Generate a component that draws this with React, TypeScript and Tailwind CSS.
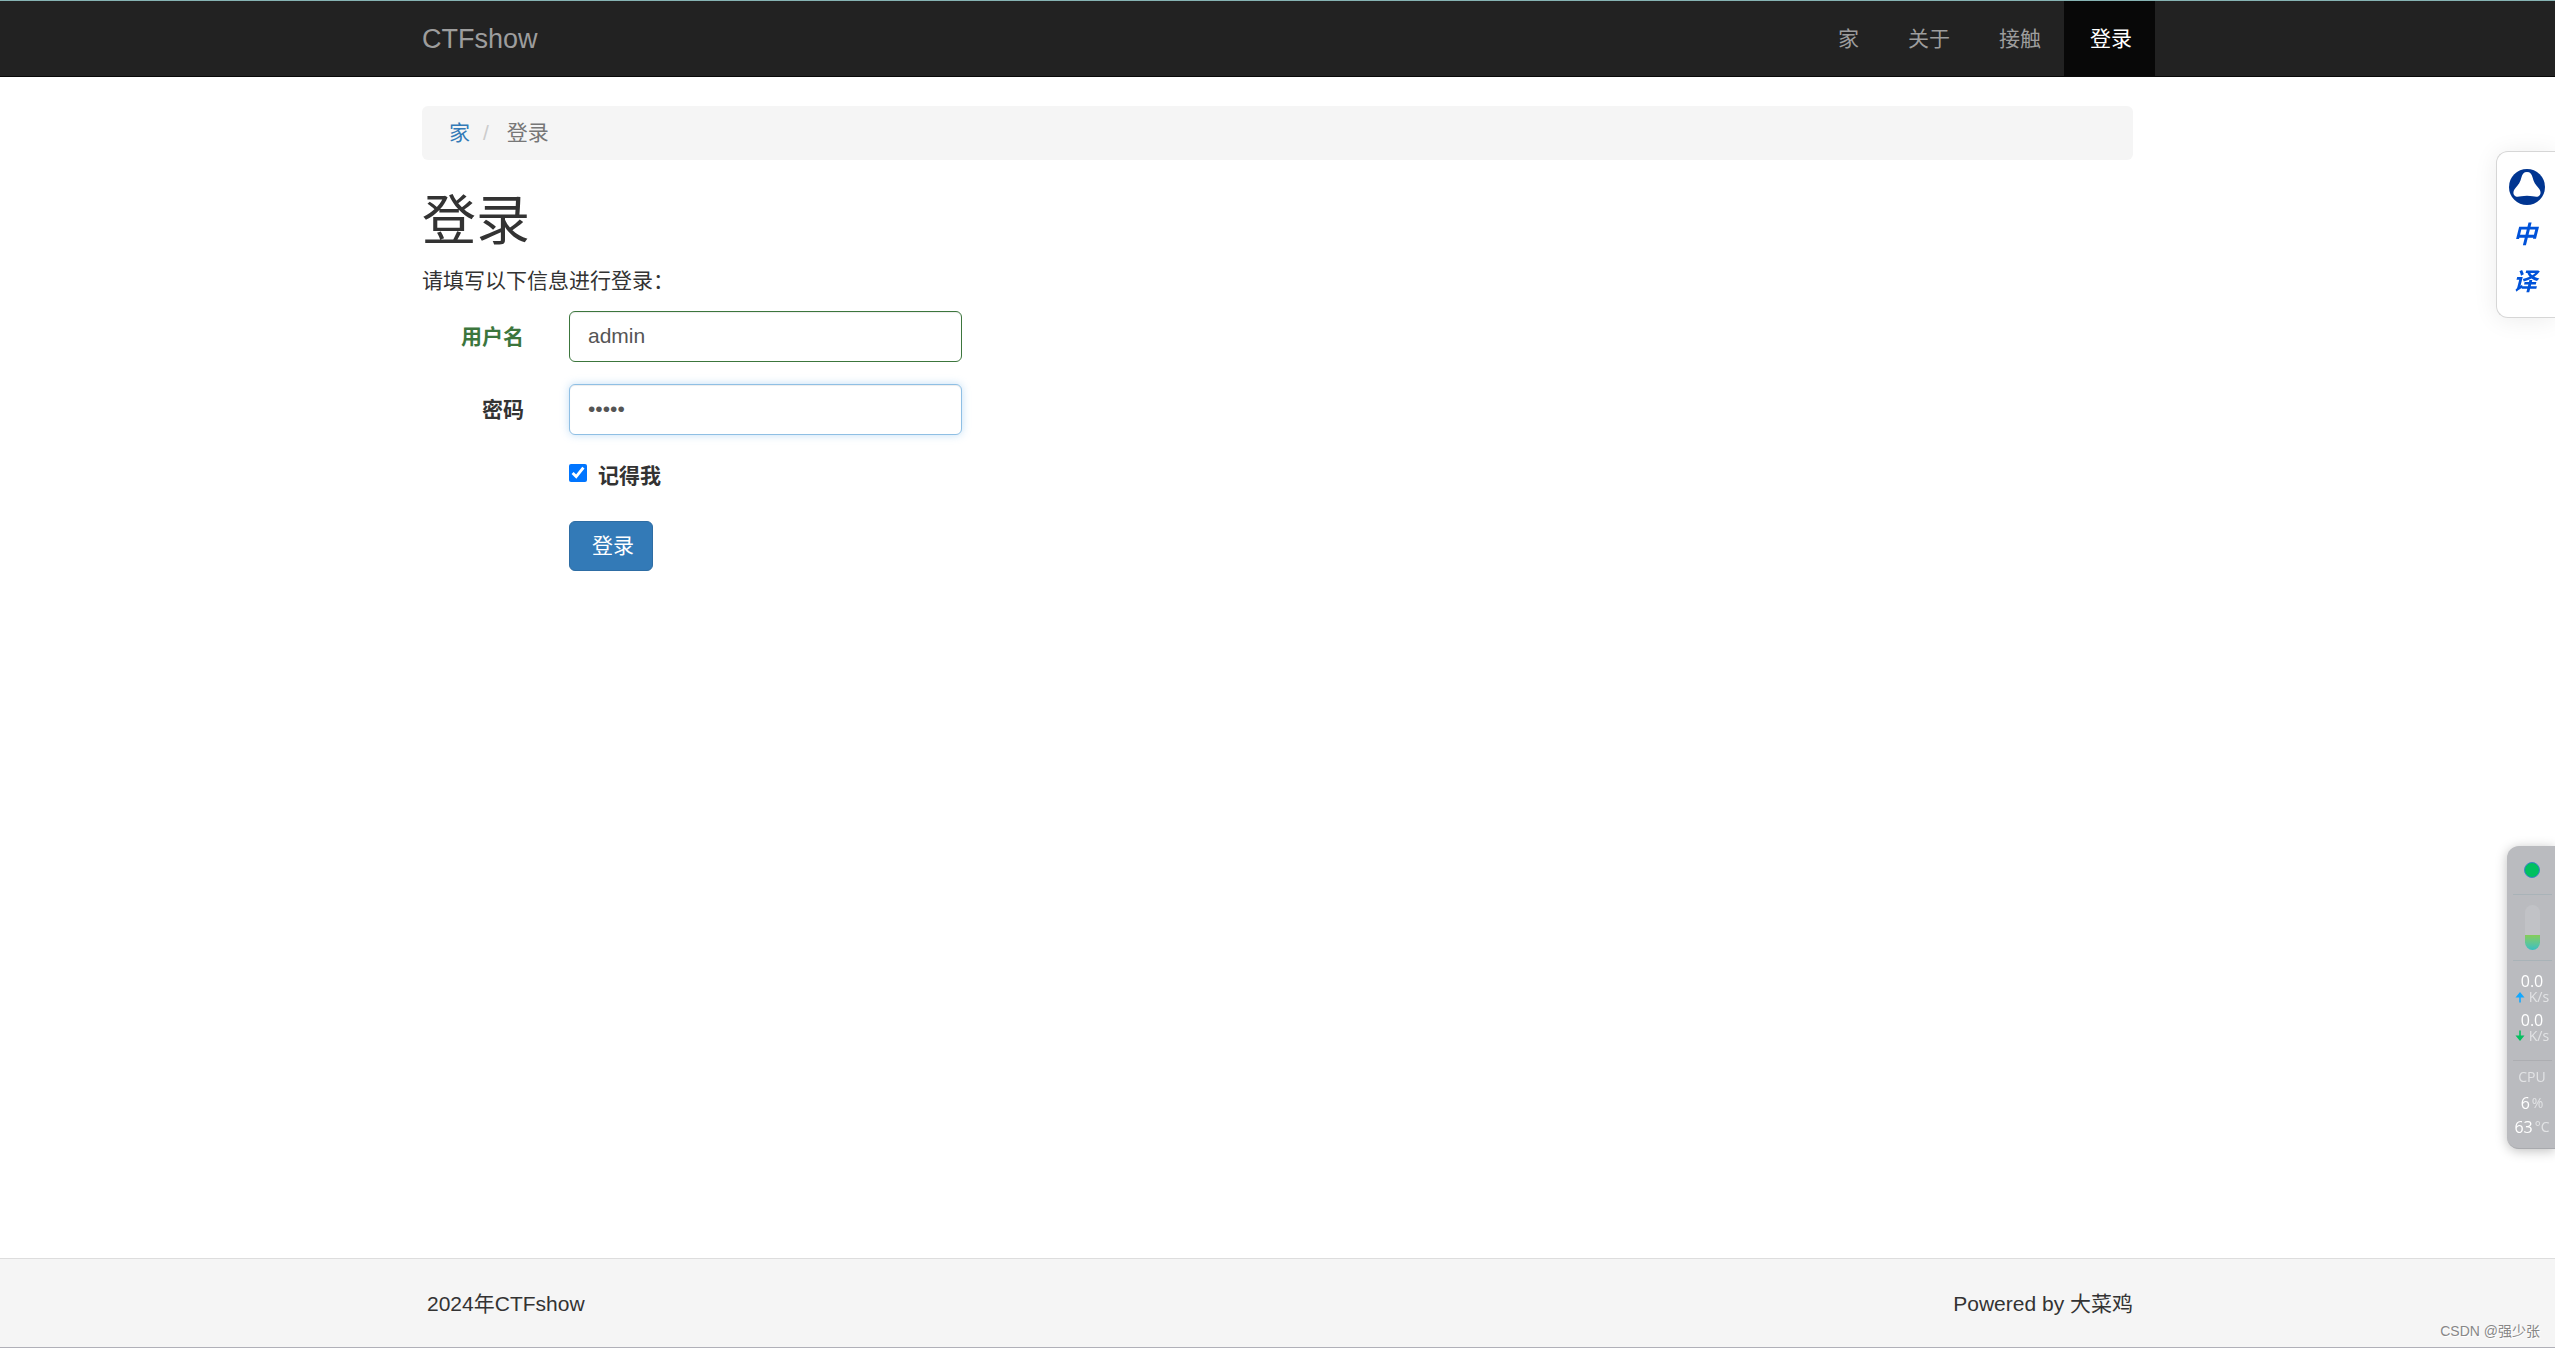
import React, { useState } from "react";

const navItems = [
  { label: "家", active: false },
  { label: "关于", active: false },
  { label: "接触", active: false },
  { label: "登录", active: true },
];

function NavBar() {
  return (
    <header className="border-t border-t-[#86b3b3] bg-[#222]">
      <nav className="border-b border-b-[#080808]">
        <div className="mx-auto flex h-[75px] max-w-[1755px] items-stretch justify-between pl-[22px]">
          <a href="#" className="flex items-center text-[27px] leading-[30px] text-[#9d9d9d]">
            CTFshow
          </a>
          <ul className="flex">
            {navItems.map((item) => (
              <li key={item.label} className="flex">
                <a
                  href="#"
                  className={
                    item.active
                      ? "flex items-center bg-[#080808] pr-[23px] pl-[26px] text-white"
                      : "flex items-center pr-[23px] pl-[26px] text-[#9d9d9d]"
                  }
                >
                  {item.label}
                </a>
              </li>
            ))}
          </ul>
        </div>
      </nav>
    </header>
  );
}

function Breadcrumb() {
  return (
    <ol className="flex rounded-md bg-[#f5f5f5] px-[27px] py-3">
      <li>
        <a href="#" className="text-[#337ab7]">
          家
        </a>
      </li>
      <li className="flex text-[#777]">
        <span className="px-[13px] text-[#ccc]">/</span>
        <span className="pl-[5px]">登录</span>
      </li>
    </ol>
  );
}

function LoginForm() {
  const [user, setUser] = useState("admin");
  const [password, setPassword] = useState("admin");
  const [remember, setRemember] = useState(true);
  return (
    <form
      onSubmit={(e) => e.preventDefault()}
      className="mt-[15px] grid grid-cols-[102px_minmax(0,393px)] items-center gap-x-[45px]"
    >
      <label htmlFor="user" className="text-right font-bold text-[#3c763d]">
        用户名
      </label>
      <input
        id="user"
        type="text"
        value={user}
        onChange={(e) => setUser(e.target.value)}
        className="h-[51px] w-full rounded-md border border-[#3c763d] bg-white px-[18px] pb-[2px] text-[#555] shadow-[inset_0_1px_1px_rgba(0,0,0,0.075)] outline-none"
      />
      <label htmlFor="password" className="mt-[22px] text-right font-bold">
        密码
      </label>
      <input
        id="password"
        type="password"
        value={password}
        onChange={(e) => setPassword(e.target.value)}
        className="mt-[22px] h-[51px] w-full rounded-md border border-[#8fbfe4] bg-white px-[18px] pb-[2px] text-[#555] shadow-[inset_0_1px_1px_rgba(0,0,0,0.075),0_0_8px_rgba(102,175,233,0.4)] outline-none"
      />
      <div className="col-start-2 mt-[26px] flex">
        <input
          id="remember"
          type="checkbox"
          checked={remember}
          onChange={(e) => setRemember(e.target.checked)}
          className="mt-[3px] size-[18px] accent-[#0075ff]"
        />
        <label htmlFor="remember" className="pl-[11px] font-bold">
          记得我
        </label>
      </div>
      <button
        type="submit"
        className="col-start-2 mt-[30px] h-[50px] justify-self-start rounded-md border border-[#2e6da4] bg-[#337ab7] pr-[18px] pl-[22px] text-white"
      >
        登录
      </button>
    </form>
  );
}

function TranslateDock() {
  return (
    <aside className="fixed top-[151px] right-0 flex h-[167px] w-[59px] flex-col items-center rounded-l-xl border border-r-0 border-[#d6d6d6] bg-white pt-[17px] pl-[2px] shadow-[0_2px_24px_rgba(0,0,0,0.08)]">
      <svg viewBox="0 0 36 36" className="size-9">
        <circle cx="18" cy="18" r="18" fill="#003591" />
        <path
          d="M18 3C14.800 3 13.200 5 12.400 8.500C11.400 13 9.500 15.500 6.500 19C3.600 22.400 3.800 26 6.800 27.400C9.500 28.300 12 26.800 18 26.800C24 26.800 26.500 28.300 29.200 27.400C32.200 26 32.400 22.400 29.500 19C26.500 15.500 24.600 13 23.600 8.500C22.800 5 21.200 3 18 3Z"
          fill="white"
        />
      </svg>
      <button type="button" className="mt-[6px] h-[47px] pr-1 text-[24px] font-bold text-[#0052d9] italic">
        中
      </button>
      <button type="button" className="h-[47px] pr-1 text-[24px] font-bold text-[#0052d9] italic">
        译
      </button>
    </aside>
  );
}

function Arrow({ down = false, color }: { down?: boolean; color: string }) {
  return (
    <svg viewBox="0 0 10 12" className="h-3 w-[10px]" fill={color}>
      {down ? (
        <path d="M4.200 0.500H5.800V5.500H9.500L5 11L0.500 5.500H4.200Z" />
      ) : (
        <path d="M4.200 11.500H5.800V6.500H9.500L5 1L0.500 6.500H4.200Z" />
      )}
    </svg>
  );
}

function Speed({ down = false, color }: { down?: boolean; color: string }) {
  return (
    <div className="flex flex-col items-center">
      <span className="h-4 text-[16px] leading-4 text-white">0.0</span>
      <span className="flex h-4 items-center gap-1 text-[14px] leading-4 text-[#e2e3e5]">
        <Arrow down={down} color={color} />
        K/s
      </span>
    </div>
  );
}

function MonitorDock() {
  return (
    <aside className="fixed top-[846px] right-0 flex h-[303px] w-12 flex-col items-center rounded-l-xl border-b border-[#a9aaae] bg-[#babbbf] pt-4 pl-[2px] font-['Open_Sans','Noto_Sans_CJK_SC',sans-serif] shadow-[0_2px_12px_rgba(0,0,0,0.25)]">
      <span className="size-4 rounded-full border border-[#3d85c6] bg-[#00c060]" />
      <hr className="mt-4 w-[39px] border-[#a9b3b8]" />
      <div className="mt-[10px] flex h-[45px] w-[15px] flex-col justify-end overflow-hidden rounded-full bg-[#c1c2c6]">
        <span className="h-[15px] bg-linear-to-b from-[#84cc56] to-[#36bfc0]" />
      </div>
      <hr className="mt-[10px] w-[39px] border-[#a9b3b8]" />
      <div className="mt-3 flex flex-col gap-[7px]">
        <Speed color="#12a8ff" />
        <Speed down color="#04bf5f" />
      </div>
      <hr className="mt-4 w-[39px] border-[#adaeb2]" />
      <span className="mt-2 text-[14px] leading-4 text-[#e2e3e5]">CPU</span>
      <span className="mt-[10px] flex gap-[2px] text-[16px] leading-4 text-white">
        6<span className="text-[14px] text-[#e2e3e5]">%</span>
      </span>
      <span className="mt-2 flex gap-[2px] text-[16px] leading-4 text-white">
        63<span className="text-[14px] text-[#e2e3e5]">°C</span>
      </span>
    </aside>
  );
}

export default function App() {
  return (
    <div
      lang="zh-CN"
      className="flex min-h-screen flex-col bg-white font-['Liberation_Sans','Noto_Sans_CJK_SC',sans-serif] text-[21px] leading-[30px] text-[#333]"
    >
      <NavBar />
      <main className="mx-auto mt-[29px] w-full max-w-[1755px] px-[22px]">
        <Breadcrumb />
        <h1 className="mt-8 text-[54px] leading-[59px]">登录</h1>
        <p className="mt-[15px]">请填写以下信息进行登录：</p>
        <LoginForm />
      </main>
      <footer className="relative mt-auto border-t border-b border-t-[#ddd] border-b-[#b0b0b8] bg-[#f5f5f5]">
        <div className="mx-auto flex h-[88px] max-w-[1755px] items-center justify-between pt-[2px] pr-[22px] pl-[27px]">
          <p>2024年CTFshow</p>
          <p>Powered by 大菜鸡</p>
        </div>
        <span className="absolute right-[15px] bottom-1 text-[14px] leading-6 text-[#888] [text-shadow:1px_1px_0_#fff]">
          CSDN @强少张
        </span>
      </footer>
      <TranslateDock />
      <MonitorDock />
    </div>
  );
}
